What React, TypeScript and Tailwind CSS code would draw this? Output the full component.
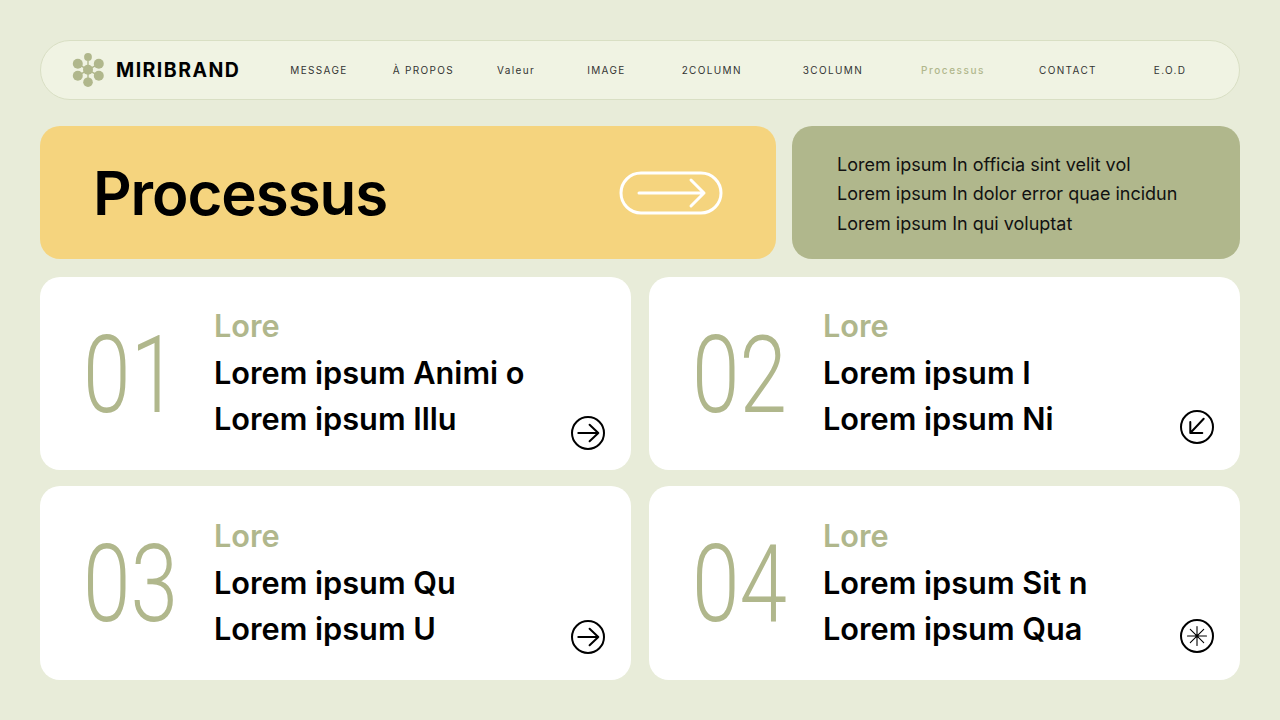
const nav: [string, string][] = [
  ["MESSAGE", "ml-[50px]"],
  ["À PROPOS", "ml-[45px]"],
  ["Valeur", "ml-[43px]"],
  ["IMAGE", "ml-[52px]"],
  ["2COLUMN", "ml-[56px]"],
  ["3COLUMN", "ml-[61px]"],
  ["Processus", "ml-[58px]"],
  ["CONTACT", "ml-[54px]"],
  ["E.O.D", "ml-[57px]"],
];

function Logo() {
  const petals: [number, number, number][] = [
    [16, 3.9, 3.9],
    [5.8, 10.8, 5],
    [26.8, 10.8, 5],
    [5.8, 22.8, 5],
    [26.8, 22.8, 5],
    [16, 29.2, 4.8],
  ];
  return (
    <svg width="33" height="34" viewBox="0 0 33 34" fill="#b0b78c" stroke="none">
      {petals.map(([x, y, r]) => (
        <g key={`${x}-${y}`}>
          <line x1="16" y1="16.8" x2={x} y2={y} stroke="#b0b78c" strokeWidth="1.4" />
          <circle cx={x} cy={y} r={r} />
        </g>
      ))}
      <circle cx="16" cy="16.8" r="5" />
    </svg>
  );
}

function Icon({ kind, className }: { kind: "right" | "downleft" | "star"; className: string }) {
  return (
    <svg width="36" height="36" viewBox="0 0 36 36" fill="none" stroke="#000" className={className} strokeLinecap="round" strokeLinejoin="round">
      <circle cx="18" cy="18" r="16" strokeWidth="2" />
      {kind === "right" && <path d="M8.3 18H28.3M19.6 9.8L28.3 18L19.6 26.2" strokeWidth="2" />}
      {kind === "downleft" && <path d="M24.7 9.7L11.3 24M11.3 13V24H23.3" strokeWidth="2" />}
      {kind === "star" && (
        <>
          <path d="M18 8.5V27.5M8.5 18H27.5M11.3 11.3L24.7 24.7M24.7 11.3L11.3 24.7" strokeWidth="1.1" />
          <circle cx="18" cy="18" r="1.4" fill="#000" stroke="none" />
        </>
      )}
    </svg>
  );
}

const cards = [
  { n: "01", a: "Lorem ipsum Animi o", b: "Lorem ipsum Illu", kind: "right" as const, pos: "mb-[19px]", top: "pt-[27px]" },
  { n: "02", a: "Lorem ipsum I", b: "Lorem ipsum Ni", kind: "downleft" as const, pos: "mb-[25px]", top: "pt-[27px]" },
  { n: "03", a: "Lorem ipsum Qu", b: "Lorem ipsum U", kind: "right" as const, pos: "mb-[25px]", top: "pt-[28px]" },
  { n: "04", a: "Lorem ipsum Sit n", b: "Lorem ipsum Qua", kind: "star" as const, pos: "mb-[26px]", top: "pt-[28px]" },
];

export default function App() {
  return (
    <div className="w-[1280px] h-[720px] overflow-hidden bg-[#e8ecd9] pt-10 px-10 font-['Inter',sans-serif] text-black">
      <header className="h-[60px] rounded-[30px] border border-[#d9dfc4] bg-[#f0f3e3] flex items-center pl-[31px]">
        <Logo />
        <span className="ml-[11px] mt-[2px] text-[19.5px] font-bold tracking-[0.075em] leading-none">MIRIBRAND</span>
        <nav className="flex items-center">
          {nav.map(([label, m]) => (
            <span
              key={label}
              className={`${m} text-[10px] leading-none ${label === "Processus" ? "tracking-[0.155em] text-[#b0b78c] font-medium" : "tracking-[0.135em] text-[#333]"}`}
            >
              {label}
            </span>
          ))}
        </nav>
      </header>

      <section className="mt-[26px] flex gap-4 h-[133px]">
        <div className="w-[736px] rounded-[20px] bg-[#f5d47e] flex items-center justify-between pl-[53px] pr-[53px]">
          <h1 className="text-[60px] font-semibold tracking-[-0.018em] leading-none">Processus</h1>
          <svg width="104" height="44" viewBox="0 0 104 44" fill="none" stroke="#fff" strokeWidth="3" strokeLinecap="round" strokeLinejoin="round">
            <rect x="2" y="2" width="100" height="40" rx="20" />
            <path d="M20 22H85M72 9L85 22L72 35" />
          </svg>
        </div>
        <div className="flex-1 rounded-[20px] bg-[#b0b78c] flex flex-col justify-center pl-[45px] pt-[3px] text-[18px] leading-[29.5px] text-[#111]">
          <p>Lorem ipsum In officia sint velit vol</p>
          <p>Lorem ipsum In dolor error quae incidun</p>
          <p>Lorem ipsum In qui voluptat</p>
        </div>
      </section>

      <section className="mt-[18px] grid grid-cols-[591px_591px] gap-x-[18px] gap-y-4 grid-rows-[193px_194px]">
        {cards.map((c) => (
          <article key={c.n} className="rounded-[20px] bg-white flex pl-[43px] pr-[25px]">
            <div className="w-[131px] self-center pt-[3px] font-['Roboto',sans-serif] font-light text-[#b0b78c] text-[107px] leading-none">
              <span className="inline-block origin-left scale-x-[0.8]">{c.n}</span>
            </div>
            <div className={`flex-1 ${c.top} text-[30.7px]`}>
              <div className="text-[#b0b78c] font-semibold leading-[44px]">Lore</div>
              <div className="font-semibold leading-[46px] mt-[2px]">{c.a}</div>
              <div className="font-semibold leading-[46px]">{c.b}</div>
            </div>
            <Icon kind={c.kind} className={`self-end ${c.pos}`} />
          </article>
        ))}
      </section>
    </div>
  );
}
